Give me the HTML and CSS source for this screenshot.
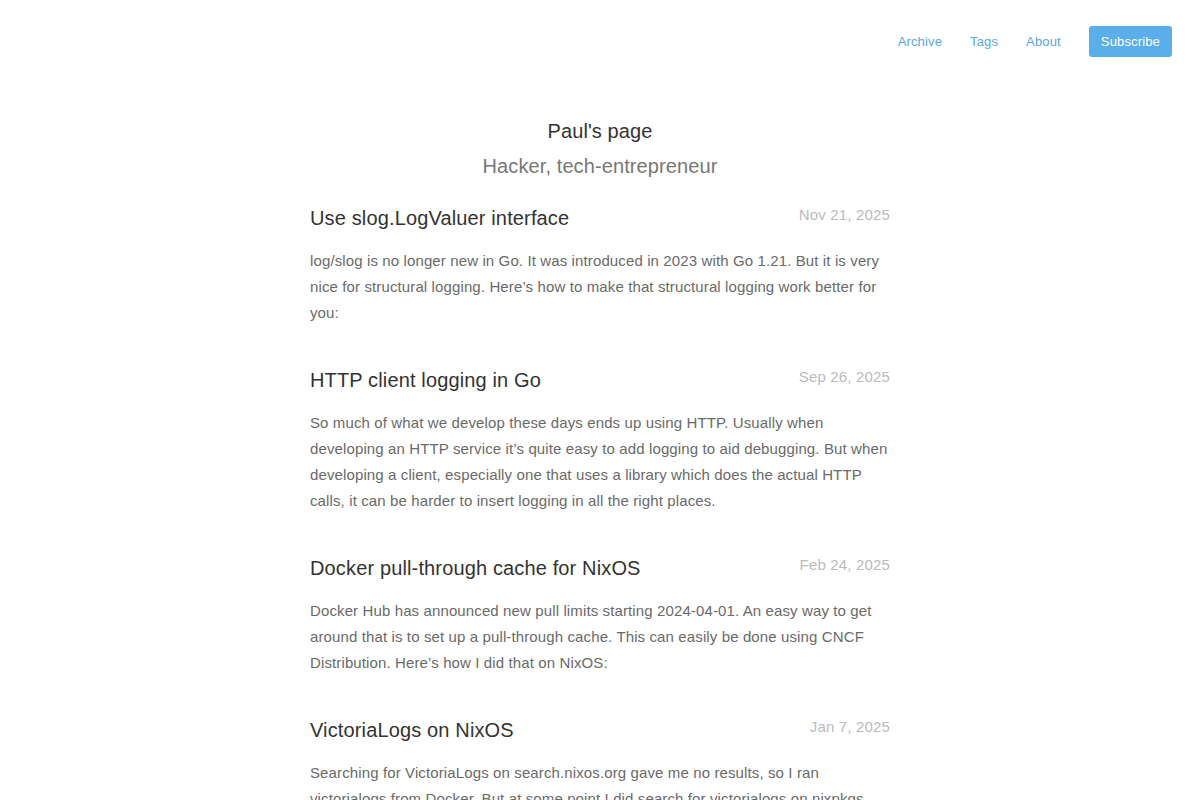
FILE: index.html
```html
<!DOCTYPE html>
<html>
<head>
<meta charset="utf-8">
<title>Paul's page</title>
<link rel="stylesheet" href="styles.css">
</head>
<body>
<header class="topbar">
  <nav class="nav">
    <a href="#" class="nav-link">Archive</a>
    <a href="#" class="nav-link">Tags</a>
    <a href="#" class="nav-link">About</a>
    <a href="#" class="subscribe">Subscribe</a>
  </nav>
</header>
<main class="main">
  <div class="site-head">
    <h1 class="site-title">Paul's page</h1>
    <p class="site-sub">Hacker, tech-entrepreneur</p>
  </div>
  <article class="post">
    <div class="post-head">
      <h2 class="post-title">Use slog.LogValuer interface</h2>
      <span class="post-date">Nov 21, 2025</span>
    </div>
    <p class="post-body">log/slog is no longer new in Go. It was introduced in 2023 with Go 1.21. But it is very nice for structural logging. Here’s how to make that structural logging work better for you:</p>
  </article>
  <article class="post">
    <div class="post-head">
      <h2 class="post-title">HTTP client logging in Go</h2>
      <span class="post-date">Sep 26, 2025</span>
    </div>
    <p class="post-body">So much of what we develop these days ends up using HTTP. Usually when developing an HTTP service it’s quite easy to add logging to aid debugging. But when developing a client, especially one that uses a library which does the actual HTTP calls, it can be harder to insert logging in all the right places.</p>
  </article>
  <article class="post">
    <div class="post-head">
      <h2 class="post-title">Docker pull-through cache for NixOS</h2>
      <span class="post-date">Feb 24, 2025</span>
    </div>
    <p class="post-body">Docker Hub has announced new pull limits starting 2024-04-01. An easy way to get around that is to set up a pull-through cache. This can easily be done using CNCF Distribution. Here’s how I did that on NixOS:</p>
  </article>
  <article class="post">
    <div class="post-head">
      <h2 class="post-title">VictoriaLogs on NixOS</h2>
      <span class="post-date">Jan 7, 2025</span>
    </div>
    <p class="post-body">Searching for VictoriaLogs on search.nixos.org gave me no results, so I ran victorialogs from Docker. But at some point I did search for victorialogs on nixpkgs and found that it was there, so here is how I set it up on NixOS.</p>
  </article>
</main>
</body>
</html>
```

FILE: styles.css
```css
html, body {
  margin: 0;
  padding: 0;
  background: #fff;
}
body {
  font-family: "Liberation Sans", Arial, sans-serif;
  color: #333;
}
.topbar {
  display: flex;
  justify-content: flex-end;
  padding: 26px 28px 0 0;
}
.nav {
  display: flex;
  align-items: center;
  gap: 28px;
  height: 31px;
}
.nav-link {
  font-size: 13px;
  letter-spacing: 0.15px;
  color: #5aa6e6;
  text-decoration: none;
}
.subscribe {
  font-size: 13px;
  letter-spacing: 0.15px;
  color: #fff;
  background: #5aaeea;
  text-decoration: none;
  height: 31px;
  line-height: 31px;
  padding: 0 12px;
  border-radius: 3px;
}
.main {
  width: 580px;
  margin: 0 auto;
}
.site-head {
  text-align: center;
  padding-top: 62px;
}
.site-title {
  margin: 0;
  font-size: 20px;
  font-weight: normal;
  line-height: 24px;
  letter-spacing: 0.1px;
  color: #333;
}
.site-sub {
  margin: 11px 0 0;
  font-size: 20px;
  line-height: 24px;
  letter-spacing: 0.1px;
  color: #777;
}
.post {
  margin-top: 28px;
}
.post + .post {
  margin-top: 42px;
}
.post-head {
  display: flex;
  justify-content: space-between;
  align-items: flex-start;
}
.post-title {
  margin: 0;
  font-size: 20px;
  font-weight: normal;
  line-height: 24px;
  letter-spacing: 0.14px;
  color: #333;
}
.post-date {
  font-size: 15px;
  line-height: 18px;
  letter-spacing: 0.17px;
  color: #bbb;
}
.post-body {
  margin: 18px 0 0;
  font-size: 15px;
  line-height: 26px;
  letter-spacing: 0.12px;
  color: #6a6a6a;
}
```
